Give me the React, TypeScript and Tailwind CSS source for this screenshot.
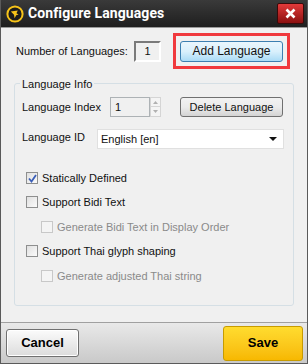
import { useState } from "react"

const font = "font-['Liberation_Sans',Arial,sans-serif]"

function Checkbox({ checked, disabled }: { checked?: boolean; disabled?: boolean }) {
  return (
    <span
      className={
        "flex h-[12px] w-[12px] shrink-0 items-center justify-center border " +
        (disabled
          ? "border-[#c8c8c8] bg-[#f4f4f4]"
          : "border-[#8e8f8f] bg-gradient-to-br from-[#e0e0e0] to-[#fbfbfb]")
      }
    >
      {checked && (
        <svg width="9" height="9" viewBox="0 0 9 9">
          <path d="M1 4.5 L3.5 7.5 L8 1" fill="none" stroke="#3b5fb8" strokeWidth="1.8" />
        </svg>
      )}
    </span>
  )
}

function CheckRow({ label, checked, disabled, indent, className }: { label: string; checked?: boolean; disabled?: boolean; indent?: boolean; className?: string }) {
  return (
    <label className={"flex h-[16px] items-center gap-[4px] " + (indent ? "pl-[26px] " : "pl-[11px] ") + (className ?? "")}>
      <Checkbox checked={checked} disabled={disabled} />
      <span className={disabled ? "text-[#8a8a8a]" : "text-[#111]"}>{label}</span>
    </label>
  )
}

export default function App() {
  const [count] = useState(1)

  return (
    <div className={`${font} flex h-[364px] w-[308px] flex-col overflow-hidden border-x border-b border-[#5a5a5a] bg-[#f0f0f0] text-[11px] text-[#111]`}>
      {/* title bar */}
      <div className="flex h-[28px] shrink-0 items-center border-b border-[#9a9a9a] bg-gradient-to-b from-[#3a3a3a] to-[#1f1f1f] pl-[5px] pr-[2px]">
        <svg width="18" height="18" viewBox="0 0 18 18" className="shrink-0">
          <circle cx="9" cy="9" r="7.6" fill="#1c1c1c" stroke="#f6c31a" strokeWidth="2" />
          <path d="M4.8 6.6 L11.8 5.4 L10.4 8.2 L12.6 9.4 L10.2 10.2 L8.6 13.2 L8 9.8 Z" fill="#f6c31a" />
        </svg>
        <span className="ml-[4px] font-['Roboto',Arial,sans-serif] text-[14px] font-bold tracking-[0.1px] text-white">
          Configure Languages
        </span>
        <button className="ml-auto mr-[1px] flex h-[21px] w-[27px] items-center justify-center rounded-[2px] border border-[#3a0a0a] bg-gradient-to-b from-[#e23a3a] to-[#8c1010]">
          <svg width="11" height="11" viewBox="0 0 11 11">
            <path d="M1.5 1.5 L9.5 9.5 M9.5 1.5 L1.5 9.5" stroke="#fff" strokeWidth="2.6" />
          </svg>
        </button>
      </div>

      {/* number of languages */}
      <div className="mt-[5px] flex items-center pl-[15px]">
        <span className="w-[118px]">Number of Languages:</span>
        <span className="flex h-[21px] w-[27px] items-center justify-center border-[2px] border-b-white border-l-[#7a7a7a] border-r-white border-t-[#7a7a7a] bg-[#f0f0f0]">
          {count}
        </span>
        <div className="ml-[12px] flex h-[36px] w-[117px] items-center justify-center border-[3px] border-[#f0393d]">
          <button className="h-[21px] w-[103px] rounded-[3px] border border-[#3c7fb1] bg-gradient-to-b from-[#eaf6fd] via-[#d9f0fc] to-[#a9dbf6] text-[12px]">
            Add Language
          </button>
        </div>
      </div>

      {/* group box */}
      <div className="relative mx-[13px] mt-[14px] rounded-[3px] border border-[#d5dfe5] pb-[21px] pt-[13px]">
        <span className="absolute -top-[8px] left-[5px] bg-[#f0f0f0] px-[2px]">Language Info</span>

        <div className="flex h-[20px] items-center pl-[7px]">
          <span className="w-[88px]">Language Index</span>
          <div className="flex h-[20px] items-center">
            <span className="flex h-[20px] w-[40px] items-center border border-[#adb2b5] bg-[#f0f0f0] pl-[4px]">1</span>
            <div className="flex h-[20px] w-[11px] flex-col">
              <span className="flex h-[10px] items-center justify-center border border-[#d5d5d5] bg-[#f4f4f4]">
                <svg width="5" height="3" viewBox="0 0 5 3"><path d="M0 3 L2.5 0 L5 3 Z" fill="#b0b0b0" /></svg>
              </span>
              <span className="flex h-[10px] items-center justify-center border border-t-0 border-[#d5d5d5] bg-[#f4f4f4]">
                <svg width="5" height="3" viewBox="0 0 5 3"><path d="M0 0 L5 0 L2.5 3 Z" fill="#b0b0b0" /></svg>
              </span>
            </div>
          </div>
          <button className="ml-[19px] h-[20px] w-[103px] rounded-[3px] border border-[#707070] bg-gradient-to-b from-[#f2f2f2] via-[#ebebeb] to-[#d4d4d4] text-[11px]">
            Delete Language
          </button>
        </div>

        <div className="mt-[12px] flex h-[20px] items-center pl-[7px]">
          <span className="-mt-[4px] w-[75px]">Language ID</span>
          <div className="flex h-[20px] w-[187px] items-center justify-between border border-[#e0e0e0] bg-white pl-[3px] pr-[6px]">
            <span>English [en]</span>
            <svg width="8" height="4" viewBox="0 0 8 4"><path d="M0 0 L8 0 L4 4 Z" fill="#111" /></svg>
          </div>
        </div>

        <CheckRow label="Statically Defined" checked className="mt-[21px]" />
        <CheckRow label="Support Bidi Text" className="mt-[8px]" />
        <CheckRow label="Generate Bidi Text in Display Order" disabled indent className="mt-[9px]" />
        <CheckRow label="Support Thai glyph shaping" className="mt-[8px]" />
        <CheckRow label="Generate adjusted Thai string" disabled indent className="mt-[9px]" />
      </div>

      <div className="flex-1" />

      {/* footer */}
      <div className="flex h-[41px] shrink-0 items-center justify-between border-t border-[#a0a0a0] bg-gradient-to-b from-[#e9e9e9] to-[#c9c9c9] pl-[5px] pr-[4px]">
        <button className="h-[28px] w-[73px] rounded-[3px] border border-[#707070] bg-gradient-to-b from-[#fbfbfb] to-[#dcdcdc] text-[13px] font-bold text-black shadow-[inset_0_0_0_1px_#fff]">
          Cancel
        </button>
        <button className="h-[35px] w-[80px] rounded-[3px] border border-[#c79b00] bg-gradient-to-b from-[#ffdc2e] to-[#f7b800] text-[13px] font-bold text-black">
          Save
        </button>
      </div>
    </div>
  )
}
